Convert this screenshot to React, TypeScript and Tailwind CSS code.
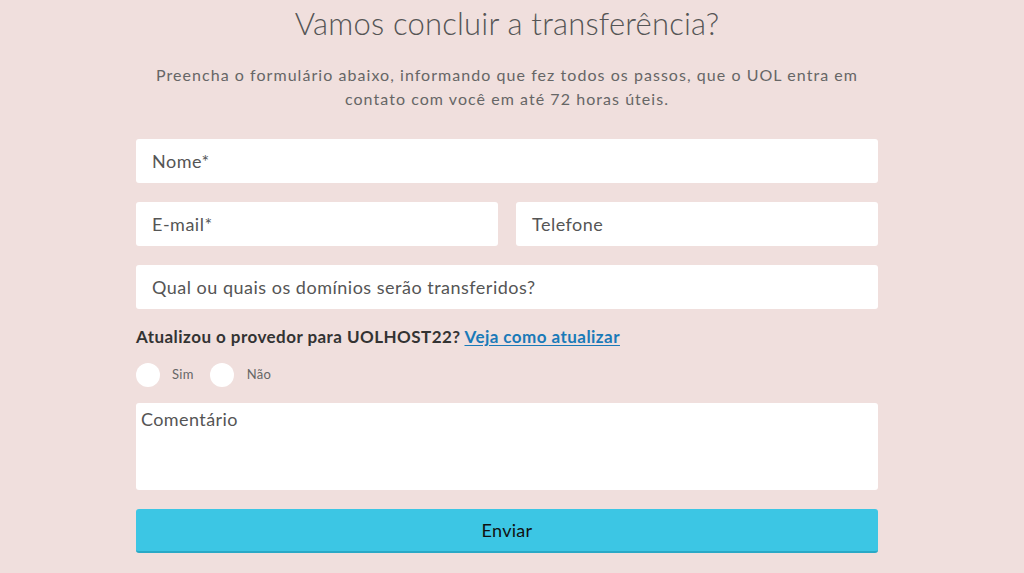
export default function App() {
  return (
    <div className="min-h-[573px] w-full bg-[#f0dfdd] font-['Lato',sans-serif]">
      <div className="mx-auto w-[742px] -translate-x-[5px] pt-[3px]">
        <h1 className="text-center text-[31px] font-light leading-[40px] tracking-[0.2px] text-[#555]">
          Vamos concluir a transferência?
        </h1>
        <p className="mx-auto mt-[20px] w-[720px] text-center text-[16px] leading-[24px] tracking-[1.05px] text-[#666]">
          Preencha o formulário abaixo, informando que fez todos os passos, que o UOL entra em
          contato com você em até 72 horas úteis.
        </p>

        <form className="mt-[28px] flex flex-col">
          <div className="flex h-[44px] items-center rounded-[3px] bg-white px-4 text-[18px] tracking-[0.5px] text-[#555]">
            Nome*
          </div>
          <div className="mt-[19px] flex gap-[18px]">
            <div className="flex h-[44px] flex-1 items-center rounded-[3px] bg-white px-4 text-[18px] tracking-[0.5px] text-[#555]">
              E-mail*
            </div>
            <div className="flex h-[44px] flex-1 items-center rounded-[3px] bg-white px-4 text-[18px] tracking-[0.5px] text-[#555]">
              Telefone
            </div>
          </div>
          <div className="mt-[19px] flex h-[44px] items-center rounded-[3px] bg-white px-4 text-[18px] tracking-[0.5px] text-[#555]">
            Qual ou quais os domínios serão transferidos?
          </div>

          <div className="mt-[16px] text-[17px] font-bold leading-[24px] tracking-[0.45px] text-[#333]">
            Atualizou o provedor para UOLHOST22?{" "}
            <a className="text-[#1a7ab8] underline underline-offset-2">Veja como atualizar</a>
          </div>

          <div className="mt-[14px] flex items-center text-[13px] tracking-[0.3px] text-[#666]">
            <span className="h-[24px] w-[24px] rounded-full bg-white" />
            <span className="ml-[12px]">Sim</span>
            <span className="ml-[16px] h-[24px] w-[24px] rounded-full bg-white" />
            <span className="ml-[13px]">Não</span>
          </div>

          <div className="mt-[16px] h-[87px] rounded-[3px] bg-white px-[5px] pt-[5px] text-[18px] leading-[22px] tracking-[0.4px] text-[#555]">
            Comentário
          </div>

          <button
            type="button"
            className="mt-[19px] flex h-[44px] items-center justify-center rounded-[3px] border-b-2 border-[#2aa9c6] bg-[#3cc6e4] text-[18px] tracking-[0.3px] text-[#111]"
          >
            Enviar
          </button>
        </form>
      </div>
    </div>
  );
}
